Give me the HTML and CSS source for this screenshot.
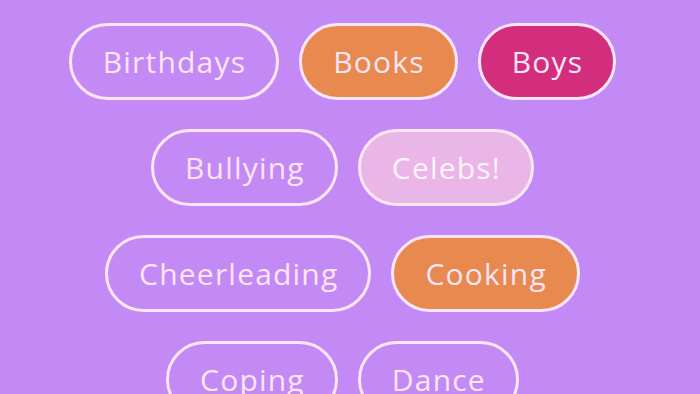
FILE: index.html
```html
<!DOCTYPE html>
<html lang="en">
<head>
  <meta charset="UTF-8" />
  <meta name="viewport" content="width=device-width, initial-scale=1.0"/>
  <title>Topics</title>
  <link rel="stylesheet" href="styles.css">
</head>
<body>
  <section class="topics">
    <div class="topic-row">
      <span class="tag">Birthdays</span>
      <span class="tag tag-orange">Books</span>
      <span class="tag tag-pink">Boys</span>
    </div>
    <div class="topic-row">
      <span class="tag">Bullying</span>
      <span class="tag tag-light">Celebs!</span>
    </div>
    <div class="topic-row">
      <span class="tag">Cheerleading</span>
      <span class="tag tag-orange">Cooking</span>
    </div>
    <div class="topic-row">
      <span class="tag">Coping</span>
      <span class="tag">Dance</span>
    </div>
  </section>
</body>
</html>
```

FILE: styles.css
```css
* {
  margin: 0;
  padding: 0;
  box-sizing: border-box;
}
body {
  font-family: "Open Sans", Lato, sans-serif;
  background-color: #c38af5;
  overflow: hidden;
}

/* Lista de tópicos */
.topics {
  display: flex;
  flex-direction: column;
  gap: 29px;
  padding: 23px 15px 0 0;
}
.topic-row {
  display: flex;
  justify-content: center;
  gap: 20px;
}

.tag {
  display: inline-flex;
  align-items: center;
  justify-content: center;
  height: 77px;
  padding: 0 30px 0 31px;
  border: 3px solid #fbe5f6;
  border-radius: 40px;
  font-size: 30px;
  letter-spacing: 1.2px;
  color: #fbe5f6;
}
.tag-orange {
  background-color: #e8894f;
}
.tag-pink {
  background-color: #d32e7d;
}
.tag-light {
  background-color: #e9b6e7;
  color: #fdf3fb;
}
```
